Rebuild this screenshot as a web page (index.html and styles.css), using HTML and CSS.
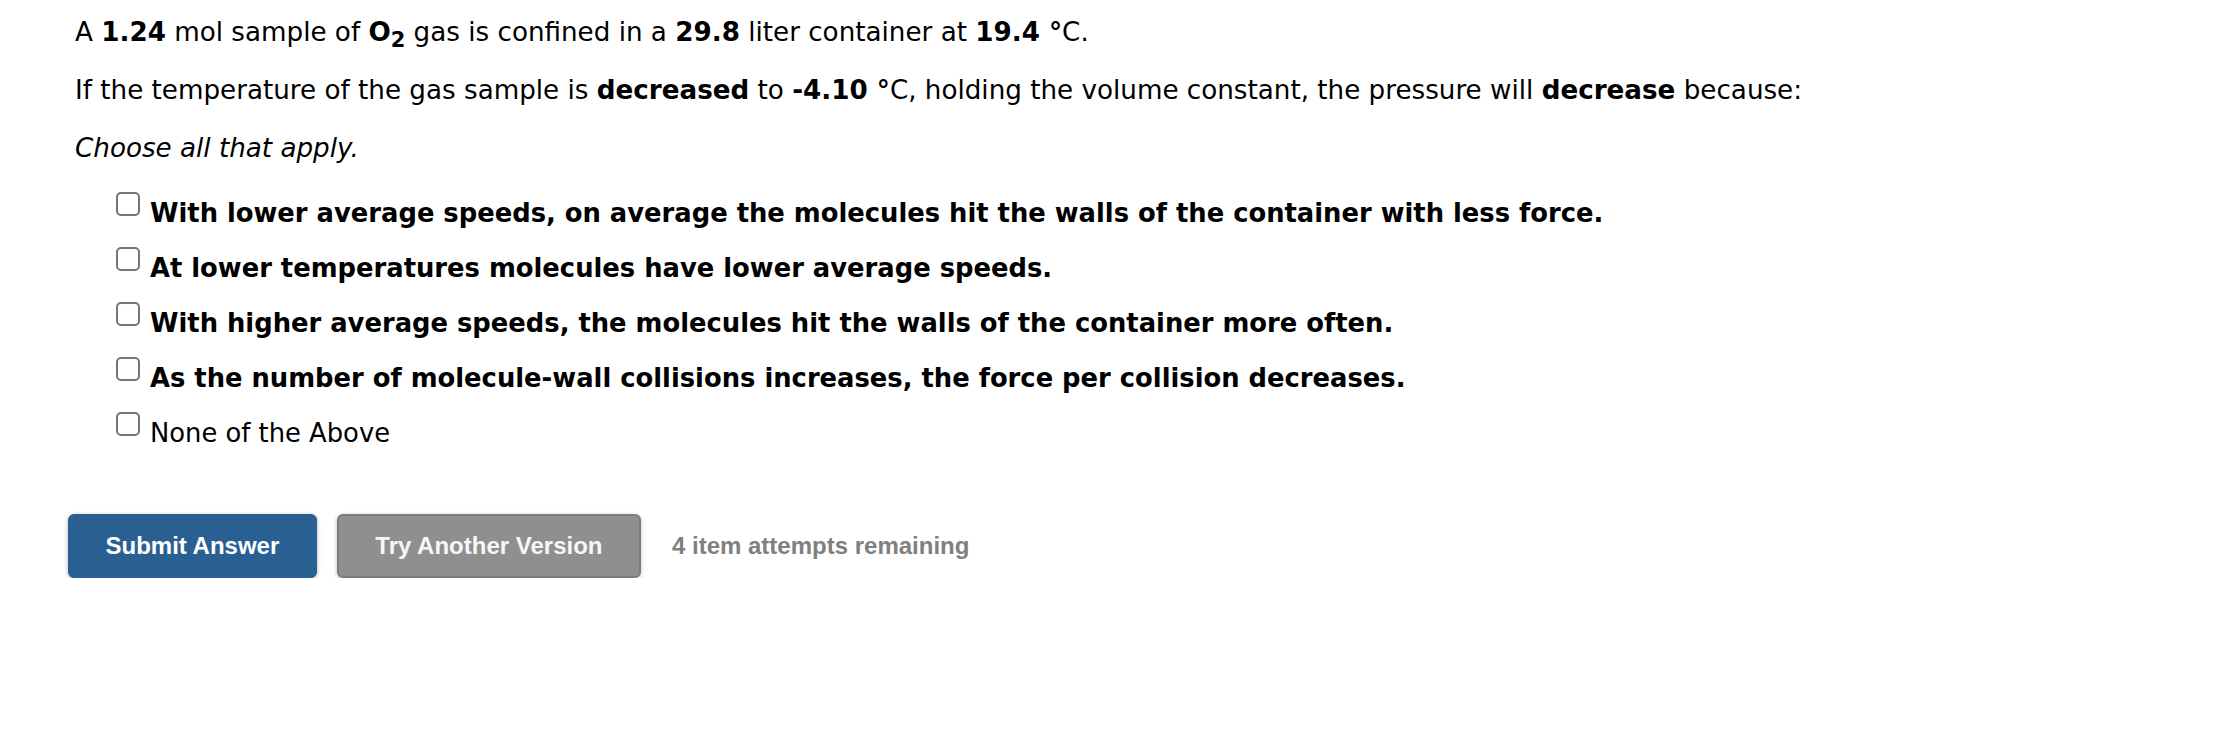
FILE: index.html
```html
<!DOCTYPE html>
<html>
<head>
<meta charset="utf-8">
<link rel="stylesheet" href="styles.css">
</head>
<body>
<div class="question">
  <p class="line">A <b>1.24</b> mol sample of <b>O<sub>2</sub></b> gas is confined in a <b>29.8</b> liter container at <b>19.4 °</b>C.</p>
  <p class="line">If the temperature of the gas sample is <b>decreased</b> to <b>-4.10 °</b>C, holding the volume constant, the pressure will <b>decrease</b> because:</p>
  <p class="line"><i>Choose all that apply.</i></p>
  <ul class="options">
    <li class="option"><span class="box"></span><span class="label strong">With lower average speeds, on average the molecules hit the walls of the container with less force.</span></li>
    <li class="option"><span class="box"></span><span class="label strong">At lower temperatures molecules have lower average speeds.</span></li>
    <li class="option"><span class="box"></span><span class="label strong">With higher average speeds, the molecules hit the walls of the container more often.</span></li>
    <li class="option"><span class="box"></span><span class="label strong">As the number of molecule-wall collisions increases, the force per collision decreases.</span></li>
    <li class="option"><span class="box"></span><span class="label">None of the Above</span></li>
  </ul>
  <div class="actions">
    <button class="btn btn-primary">Submit Answer</button>
    <button class="btn btn-secondary">Try Another Version</button>
    <span class="attempts">4 item attempts remaining</span>
  </div>
</div>
</body>
</html>
```

FILE: styles.css
```css
html, body {
  margin: 0;
  padding: 0;
  background: #ffffff;
}
.question {
  padding: 3px 0 0 75px;
  font-family: "DejaVu Sans", Verdana, sans-serif;
  font-size: 26.2px;
  color: #000000;
}
.line {
  margin: 0;
  line-height: 58px;
  white-space: nowrap;
}
.line sub {
  font-size: 0.8em;
  line-height: 0;
  vertical-align: -0.28em;
}
.options {
  list-style: none;
  margin: 8.5px 0 0 0;
  padding: 0 0 0 41px;
}
.option {
  display: flex;
  align-items: flex-start;
  height: 55px;
  line-height: 55px;
  white-space: nowrap;
  font-size: 25.8px;
}
.box {
  flex: none;
  box-sizing: border-box;
  width: 24px;
  height: 24px;
  margin-top: 6.5px;
  margin-right: 10px;
  border: 2px solid #767676;
  border-radius: 5px;
  background: #ffffff;
}
.label.strong {
  font-weight: bold;
}
.actions {
  display: flex;
  align-items: center;
  margin: 53.5px 0 0 -7px;
  font-family: "Liberation Sans", Arial, sans-serif;
  font-size: 24px;
  font-weight: bold;
}
.btn {
  box-sizing: border-box;
  height: 64px;
  padding: 0 36.5px;
  border-radius: 6px;
  font: inherit;
  color: #ffffff;
  cursor: pointer;
}
.btn-primary {
  background: #2a5f92;
  border: 1px solid #2a5f92;
  box-shadow: 0 1px 4px rgba(0, 0, 0, 0.3);
}
.btn-secondary {
  margin-left: 20px;
  background: #8f8f8f;
  border: 2px solid #7b7b7b;
  color: #f7f7f7;
  box-shadow: 0 1px 4px rgba(0, 0, 0, 0.25);
}
.attempts {
  margin-left: 31px;
  color: #808080;
}
```
